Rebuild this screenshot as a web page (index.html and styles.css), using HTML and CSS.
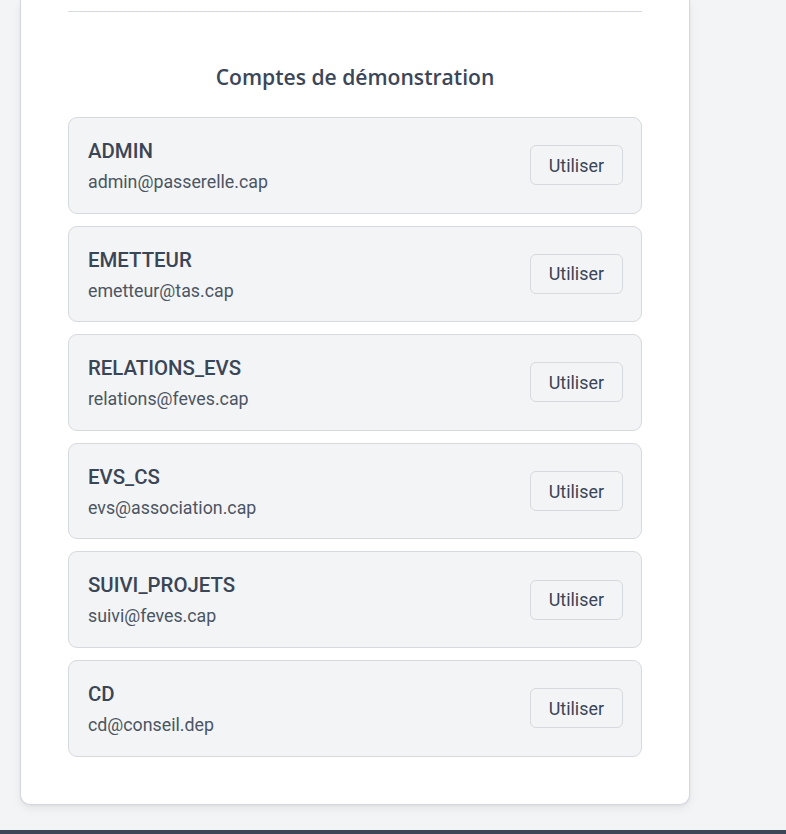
FILE: index.html
```html
<!DOCTYPE html>
<html lang="fr">
<head>
<meta charset="utf-8">
<title>Comptes de démonstration</title>
<link rel="stylesheet" href="styles.css">
</head>
<body>
<main class="page">
  <section class="card">
    <hr class="divider">
    <h2 class="heading">Comptes de démonstration</h2>
    <ul class="accounts">
      <li class="account">
        <div class="info"><div class="role">ADMIN</div><div class="email">admin@passerelle.cap</div></div>
        <button class="use" type="button">Utiliser</button>
      </li>
      <li class="account">
        <div class="info"><div class="role">EMETTEUR</div><div class="email">emetteur@tas.cap</div></div>
        <button class="use" type="button">Utiliser</button>
      </li>
      <li class="account">
        <div class="info"><div class="role">RELATIONS_EVS</div><div class="email">relations@feves.cap</div></div>
        <button class="use" type="button">Utiliser</button>
      </li>
      <li class="account">
        <div class="info"><div class="role">EVS_CS</div><div class="email">evs@association.cap</div></div>
        <button class="use" type="button">Utiliser</button>
      </li>
      <li class="account">
        <div class="info"><div class="role">SUIVI_PROJETS</div><div class="email">suivi@feves.cap</div></div>
        <button class="use" type="button">Utiliser</button>
      </li>
      <li class="account">
        <div class="info"><div class="role">CD</div><div class="email">cd@conseil.dep</div></div>
        <button class="use" type="button">Utiliser</button>
      </li>
    </ul>
  </section>
</main>
<footer class="footer"></footer>
</body>
</html>
```
FILE: styles.css
```css
* { box-sizing: border-box; }
html, body { margin: 0; padding: 0; }
body {
  background: #f3f4f6;
  font-family: Roboto, "Liberation Sans", sans-serif;
  color: #374151;
  min-height: 834px;
}
.page {
  padding: 0 96px 25px 20px;
}
.card {
  width: 670px;
  background: #ffffff;
  border: 1px solid #d4d7dd;
  border-top: 0;
  border-radius: 0 0 10px 10px;
  padding: 11px 47px 47px 47px;
  box-shadow: 0 4px 10px rgba(0, 0, 0, 0.06), 0 1px 3px rgba(0, 0, 0, 0.05);
}
.divider {
  margin: 0;
  border: 0;
  height: 1px;
  background: #d6d9de;
}
.heading {
  margin: 50px 0 25px;
  text-align: center;
  font-family: "Open Sans", "Noto Sans", sans-serif;
  font-weight: 600;
  font-size: 21.1px;
  line-height: 30px;
  color: #3b4658;
}
.accounts {
  list-style: none;
  margin: 0;
  padding: 0;
  display: flex;
  flex-direction: column;
  gap: 12px;
}
.account {
  display: flex;
  align-items: center;
  justify-content: space-between;
  background: #f3f4f6;
  border: 1px solid #d6d9de;
  border-radius: 9px;
  padding: 19px 18px 17px 19px;
}
.role {
  font-size: 20.4px;
  font-weight: 500;
  line-height: 28px;
  color: #3a4556;
}
.email {
  margin-top: 4px;
  font-size: 17.8px;
  line-height: 26.6px;
  color: #4b5563;
}
.use {
  height: 40px;
  margin-top: -2px;
  padding: 0 18px;
  border: 1px solid #d6d9de;
  border-radius: 6px;
  background: #f3f4f6;
  font-family: Roboto, "Liberation Sans", sans-serif;
  font-size: 17.9px;
  color: #3a4556;
}
.footer {
  height: 5px;
  background: #3c4657;
}
```
